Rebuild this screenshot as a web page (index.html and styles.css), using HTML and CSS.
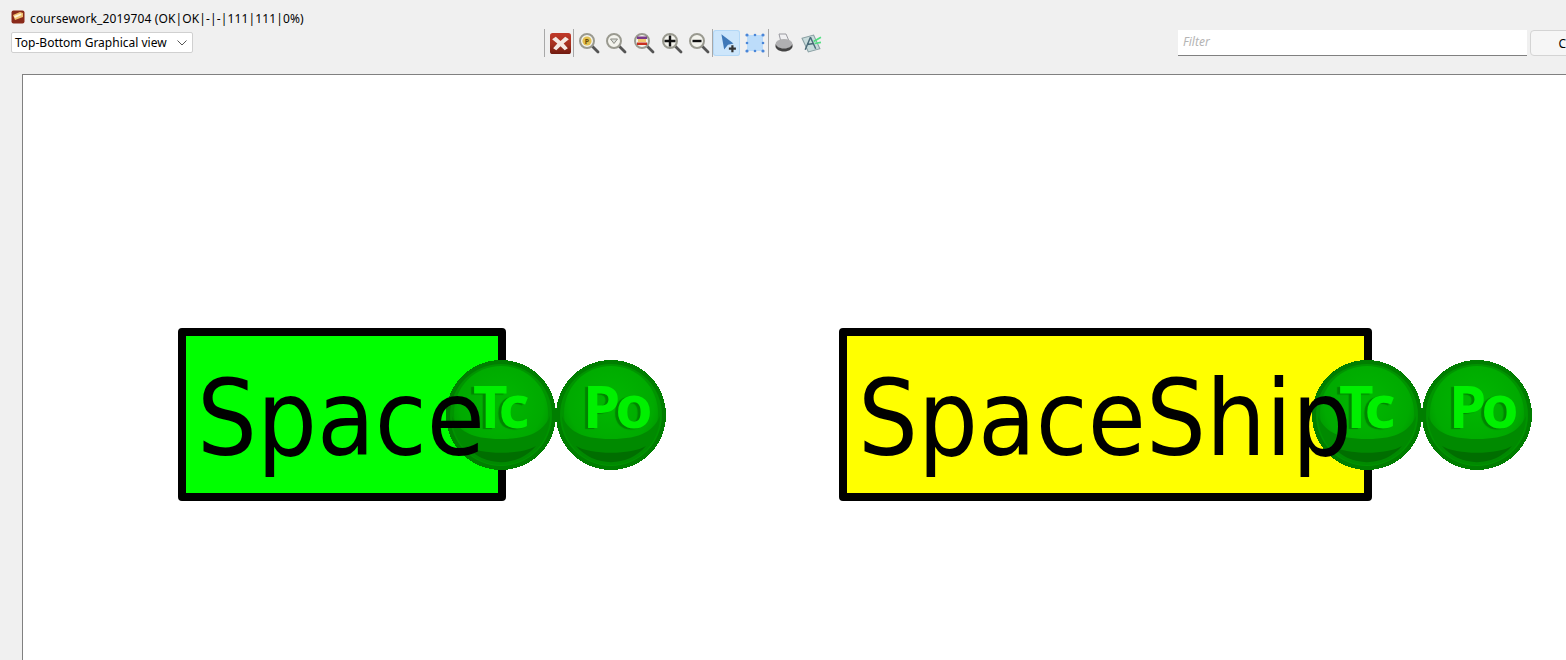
FILE: index.html
```html
<!DOCTYPE html>
<html lang="en">
<head>
    <meta charset="UTF-8">
    <title>coursework_2019704</title>
    <link rel="stylesheet" href="styles.css">
</head>
<body>
    <svg class="defs" width="0" height="0">
        <defs>
            <symbol id="lens" viewBox="0 0 22 22">
                <path d="M13.5 13.5 L20 20" stroke="#555" stroke-width="2.8" stroke-linecap="round"/>
                <circle cx="9" cy="9" r="7" fill="#f4f4ee" stroke="#9a9a90" stroke-width="2"/>
            </symbol>
            <radialGradient id="ball" cx="50%" cy="40%" r="60%">
                <stop offset="0" stop-color="#00b800"/>
                <stop offset="0.75" stop-color="#00aa00"/>
                <stop offset="1" stop-color="#009400"/>
            </radialGradient>
            <linearGradient id="gloss" x1="0" y1="0" x2="0" y2="1">
                <stop offset="0" stop-color="#c0392a"/>
                <stop offset="0.55" stop-color="#a5301f"/>
                <stop offset="1" stop-color="#6f1a10"/>
            </linearGradient>
            <symbol id="badge" viewBox="0 0 110 110">
                <circle cx="55" cy="55" r="55" fill="#007e00" shape-rendering="crispEdges"/>
                <circle cx="55" cy="55" r="51" fill="#009400"/>
                <circle cx="55" cy="53" r="47" fill="url(#ball)"/>
                <path d="M6 56 A49 49 0 0 0 104 56 C98 70 86 79 55 79 C24 79 12 70 6 56 Z" fill="#008a00"/>
                <path d="M20 86 A46 46 0 0 0 90 86 C76 95 34 95 20 86 Z" fill="#006e00"/>
            </symbol>
        </defs>
    </svg>

    <header class="top">
        <div class="title">
            <svg class="title-icon" width="14" height="14" viewBox="0 0 14 14">
                <rect x="0.5" y="0.5" width="13" height="13" rx="2" fill="#8a2a1a"/>
                <path d="M2 5 L9 2 L12 3 L12 7 L4 10 Z" fill="#f0c070"/>
                <path d="M3 6 L10 3.5 L10.5 5 L4 8 Z" fill="#fff4d8"/>
            </svg>
            <span>coursework_2019704 (OK|OK|-|-|111|111|0%)</span>
        </div>
        <div class="toolbar">
            <div class="view-select">
                <span>Top-Bottom Graphical view</span>
                <svg width="10" height="6" viewBox="0 0 10 6"><path d="M0.5 0.5 L5 5 L9.5 0.5" fill="none" stroke="#555"/></svg>
            </div>
            <div class="tools">
                <i class="sep"></i>
                <button class="tool">
                    <svg width="21" height="21" viewBox="0 0 20 20">
                        <rect width="20" height="20" rx="2.5" fill="url(#gloss)"/>
                        <path d="M2 6 L5.5 3.5 L10 7.5 L14.5 3.5 L18 6 L13 10 L17 14.5 L14 16.5 L10 12.5 L6 16.5 L3 14.5 L7 10 Z" fill="#f5e8e2"/>
                    </svg>
                </button>
                <i class="sep"></i>
                <button class="tool">
                    <svg width="22" height="22"><use href="#lens"/><circle cx="9" cy="9" r="4.6" fill="#e2c050"/><text class="lens-mark" x="9" y="11.5">P</text></svg>
                </button>
                <button class="tool">
                    <svg width="22" height="22"><use href="#lens"/><path d="M5.5 7 L12.5 7 L9 11.5 Z" fill="#d8dcd8" stroke="#8b8b83"/></svg>
                </button>
                <button class="tool">
                    <svg width="22" height="22"><use href="#lens"/><rect x="4" y="4.5" width="10" height="2.5" fill="#7a3a8a"/><rect x="5" y="7" width="8" height="3" fill="#f0c870"/><rect x="4" y="10.5" width="10" height="2.5" fill="#c83020"/></svg>
                </button>
                <button class="tool">
                    <svg width="22" height="22"><use href="#lens"/><path d="M3.5 9 H14.5 M9 3.5 V14.5" stroke="#111" stroke-width="2.4"/></svg>
                </button>
                <button class="tool">
                    <svg width="22" height="22"><use href="#lens"/><path d="M4.5 9 H13.5" stroke="#111" stroke-width="2.4"/></svg>
                </button>
                <i class="sep"></i>
                <button class="tool active">
                    <svg width="22" height="22" viewBox="0 0 20 20">
                        <path d="M4 2 L15 10.5 L10 11.5 L6.5 16 Z" fill="#3f78b8"/>
                        <path d="M14 12 V18.5 M10.8 15.2 H17.2" stroke="#333" stroke-width="2"/>
                    </svg>
                </button>
                <button class="tool">
                    <svg width="20" height="20" viewBox="0 0 20 20">
                        <rect x="2" y="2" width="16" height="16" fill="#bcdcfa"/>
                        <g fill="#4a86d8">
                            <circle cx="2" cy="2" r="1.6"/><circle cx="10" cy="2" r="1.3"/><circle cx="18" cy="2" r="1.6"/>
                            <circle cx="2" cy="10" r="1.3"/><circle cx="18" cy="10" r="1.3"/>
                            <circle cx="2" cy="18" r="1.6"/><circle cx="10" cy="18" r="1.3"/><circle cx="18" cy="18" r="1.6"/>
                        </g>
                    </svg>
                </button>
                <i class="sep"></i>
                <button class="tool">
                    <svg width="20" height="20" viewBox="0 0 20 20">
                        <path d="M5 1 L12 1 L15 8 L7 9 Z" fill="#f0f0f2" stroke="#9a9aa0"/>
                        <ellipse cx="10" cy="11" rx="8.5" ry="5" fill="#b0b0b2"/>
                        <path d="M1.5 11 C4 17 16 17 18.5 11 L18.5 14 C16 20 4 20 1.5 14 Z" fill="#444"/>
                    </svg>
                </button>
                <button class="tool">
                    <svg width="21" height="21" viewBox="0 0 20 20">
                        <path d="M1 5 L12 2 L18 15 L7 18 Z" fill="#c8dcdc" stroke="#8aa0a4"/>
                        <path d="M9 4 L4 16 M9 4 L14 15 M6 11 L12 10" stroke="#4a6a78" stroke-width="1.4" fill="none"/>
                        <path d="M12 8 L19 4 M13 10 L19 9" stroke="#50e080" stroke-width="1.6"/>
                    </svg>
                </button>
            </div>
            <div class="filter-row">
                <div class="filter">Filter</div>
                <button class="clear">Clear</button>
            </div>
        </div>
    </header>

    <main class="canvas">
        <div class="node node-space">
            <span class="node-label">Space</span>
            <div class="badges">
                <div class="badge">
                    <svg width="110" height="110"><use href="#badge"/></svg>
                    <span class="badge-text">Tc</span>
                </div>
                <div class="badge">
                    <svg width="110" height="110"><use href="#badge"/></svg>
                    <span class="badge-text">Po</span>
                </div>
            </div>
        </div>
        <div class="node node-ship">
            <span class="node-label">SpaceShip</span>
            <div class="badges">
                <div class="badge">
                    <svg width="110" height="110"><use href="#badge"/></svg>
                    <span class="badge-text">Tc</span>
                </div>
                <div class="badge">
                    <svg width="110" height="110"><use href="#badge"/></svg>
                    <span class="badge-text">Po</span>
                </div>
            </div>
        </div>
    </main>
</body>
</html>
```

FILE: styles.css
```css
html, body {
    height: 100%;
}
body {
    margin: 0;
    display: flex;
    flex-direction: column;
    overflow: hidden;
    background: #f0f0f0;
    color: #000;
    font-family: "Noto Sans", sans-serif;
    font-size: 12px;
}
.defs {
    position: absolute;
}
.top {
    height: 74px;
    flex: none;
    box-sizing: border-box;
    padding: 9px 0 0 11px;
}
.title {
    display: flex;
    align-items: center;
    gap: 5px;
    height: 18px;
    white-space: nowrap;
    letter-spacing: 0.13px;
}
.title-icon {
    margin-top: -3px;
}
.toolbar {
    display: grid;
    grid-template-columns: 533px 634px 1fr;
    margin-top: 2px;
    align-items: start;
}
.view-select {
    width: 182px;
    height: 21px;
    box-sizing: border-box;
    margin-top: 3px;
    padding: 0 5px 0 3px;
    display: flex;
    align-items: center;
    justify-content: space-between;
    background: #fff;
    border: 1px solid #d0d0d0;
    border-radius: 2px;
    white-space: nowrap;
}
/* Werkzeugleiste */
.tools {
    display: flex;
    align-items: center;
    height: 28px;
}
.sep {
    width: 1px;
    height: 28px;
    background: #a8a8a8;
    flex: none;
}
.tool {
    width: 27.6px;
    height: 26px;
    padding: 0 0 0 3px;
    display: flex;
    align-items: center;
    justify-content: center;
    flex: none;
    border: 0;
    border-radius: 3px;
    background: transparent;
}
.tool.active {
    background: #cde6fb;
    box-shadow: inset 0 0 0 1px #b4d8f6;
}
.lens-mark {
    font: bold 7px "Noto Sans", sans-serif;
    text-anchor: middle;
    fill: #6a4a00;
}
.filter-row {
    display: flex;
    gap: 3px;
    margin-top: 1px;
}
.filter {
    width: 349px;
    height: 26px;
    flex: none;
    box-sizing: border-box;
    padding-left: 5px;
    line-height: 24px;
    background: #fff;
    border-bottom: 1px solid #808080;
    color: #b4b4b4;
    font-style: italic;
}
.clear {
    width: 86px;
    height: 26px;
    flex: none;
    padding: 0;
    background: #f6f6f6;
    border: 1px solid #d4d4d4;
    border-radius: 4px;
    color: #000;
    font: inherit;
}
/* Zeichenflaeche */
.canvas {
    position: relative;
    flex: 1;
    margin-left: 22px;
    background: #fff;
    border-top: 1px solid #808080;
    border-left: 1px solid #808080;
}
.node {
    position: absolute;
    top: 253px;
    height: 173px;
    box-sizing: border-box;
    border: 8px solid #000;
    border-radius: 4px;
}
.node-space {
    left: 155px;
    width: 328px;
    background: #00ff00;
}
.node-ship {
    left: 816px;
    width: 533px;
    background: #ffff00;
}
.node-label {
    position: absolute;
    z-index: 2;
    left: 11px;
    top: 22px;
    font-family: "DejaVu Sans", sans-serif;
    font-stretch: condensed;
    font-size: 105px;
    line-height: 122px;
    white-space: nowrap;
}
.badges {
    position: absolute;
    z-index: 1;
    top: 24px;
    left: calc(100% - 52px);
    display: flex;
}
.badge {
    position: relative;
    width: 110px;
    height: 110px;
}
.badge svg {
    display: block;
}
.badge-text {
    position: absolute;
    left: 27px;
    top: 5px;
    font-family: "Noto Sans", sans-serif;
    font-weight: 700;
    font-size: 60px;
    line-height: 80px;
    letter-spacing: -5px;
    color: #00f000;
    text-shadow: -3px 1px 1px #008400;
}
```
